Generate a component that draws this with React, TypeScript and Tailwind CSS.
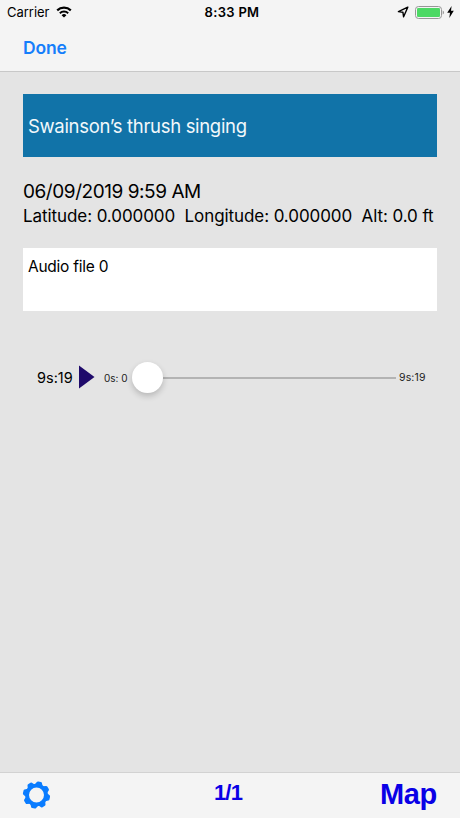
const TEETH = [13, 58, 103, 148, 193, 238, 283, 328]

function StatusBar() {
  return (
    <div className="grid h-6 grid-cols-3 items-center text-[13px] leading-6">
      <div className="flex items-center gap-[7px] pl-[7px]">
        <span className="tracking-[-0.02px]">Carrier</span>
        <svg width="16" height="12" viewBox="0 0 16 12" className="-mt-px">
          <path d="M1.2 4.4A9.9 9.9 0 0 1 14.8 4.4" fill="none" stroke="#000" strokeWidth="2.2" />
          <path d="M3.8 7.2A6.1 6.1 0 0 1 12.2 7.2" fill="none" stroke="#000" strokeWidth="1.9" />
          <path d="M8 11.6 5.6 9.2A3.5 3.5 0 0 1 10.4 9.2Z" />
        </svg>
      </div>
      <span className="pl-[4px] text-center font-semibold tracking-[0.3px] whitespace-nowrap">8:33 PM</span>
      <div className="flex items-center justify-end pr-[6px]">
        <svg width="12" height="12" viewBox="0 0 12 12" className="mr-[6px]">
          <path d="M10.8 1.2 1.4 5.6 5.9 6.2 6.6 10.8Z" fill="none" stroke="#000" strokeWidth="1.4" strokeLinejoin="round" />
        </svg>
        <svg width="29" height="13" viewBox="0 0 29 13">
          <rect x="0.5" y="0.5" width="26" height="12" rx="3" fill="#f4f4f4" stroke="#979797" />
          <rect x="2" y="2" width="23" height="9" rx="1.3" fill="#4cd964" />
          <path d="M27.7 4.5Q29 5 29 6.5T27.7 8.5Z" fill="#979797" />
        </svg>
        <svg width="7" height="12" viewBox="0 0 7 12" className="ml-[3px]">
          <path d="M4.6 0 0.2 6.8H3L2.3 12 6.8 4.8H4Z" />
        </svg>
      </div>
    </div>
  )
}

function GearIcon() {
  return (
    <svg width="28" height="28" viewBox="-14.5 -14 28 28">
      <circle r="9.4" fill="none" stroke="#0a7cff" strokeWidth="3.8" />
      {TEETH.map((angle) => (
        <path
          key={angle}
          d="M-4 -10 -2.6 -12.8Q-2.2 -13.6 -1.4 -13.6H1.4Q2.2 -13.6 2.6 -12.8L4 -10Z"
          fill="#0a7cff"
          transform={`rotate(${angle})`}
        />
      ))}
    </svg>
  )
}

function Player() {
  return (
    <div className="mt-[50px] flex h-8 items-center pl-[14px] text-black">
      <span className="w-[42px] pt-px text-[14.5px] whitespace-nowrap">9s:19</span>
      <button aria-label="Play">
        <svg width="16" height="24" viewBox="0 0 16 24" className="block">
          <path d="M0 0.5 15.5 12 0 23.5Z" fill="#1f0a6b" />
        </svg>
      </button>
      <span className="ml-[9px] w-[28px] pt-[2px] text-[10px] whitespace-nowrap text-[#222]">0s: 0</span>
      <div className="flex w-[264px] items-center">
        <div className="z-10 size-[31px] shrink-0 rounded-full bg-white shadow-[0_3px_6px_rgba(0,0,0,0.2)]" />
        <div className="mt-[2px] h-[2px] grow bg-[#b3b3b3]" />
      </div>
      <span className="ml-[3px] pt-[2px] text-[10.5px] tracking-[0.15px] whitespace-nowrap text-[#222]">9s:19</span>
    </div>
  )
}

export default function App() {
  return (
    <div className="flex h-[818px] w-[460px] flex-col overflow-hidden bg-[#e4e4e4] font-['Inter',sans-serif] text-black">
      <header className="h-[72px] border-b border-[#c8c8c8] bg-[#f4f4f4]">
        <StatusBar />
        <button className="ml-[23px] block h-[49px] text-[17.5px] font-semibold tracking-[-0.2px] text-[#157efb]">Done</button>
      </header>

      <main className="grow px-[23px] pt-[22px]">
        <div className="flex h-[63px] items-center bg-[#1173a8] pt-[2px] pl-[5px] text-[18.5px] tracking-[-0.32px] text-[#f2f8fb]">
          Swainson’s thrush singing
        </div>
        <div className="mt-[23px] text-[19px] leading-6 tracking-[-0.45px]">06/09/2019 9:59 AM</div>
        <div className="text-[17px] leading-6 tracking-[-0.08px] whitespace-pre">
          {'Latitude: 0.000000  Longitude: 0.000000  Alt: 0.0 ft'}
        </div>
        <div className="mt-[20px] h-[63px] bg-white pt-[9px] pl-[5px] text-[15.5px] leading-5 tracking-[-0.25px]">
          Audio file 0
        </div>
        <Player />
      </main>

      <footer className="grid h-[46px] grid-cols-3 border-t border-[#d2d2d2] bg-[#f4f4f4] font-['Liberation_Sans',Arial,sans-serif] font-bold text-[#0a00e6]">
        <button aria-label="Settings" className="mt-[8px] ml-[22px] size-7">
          <GearIcon />
        </button>
        <span className="pt-[6px] pr-[4px] text-center text-[22px] leading-7 tracking-[-0.8px]">1/1</span>
        <button className="h-[42px] pr-[23px] text-right text-[29px] leading-[42px] tracking-[-0.3px]">Map</button>
      </footer>
    </div>
  )
}
